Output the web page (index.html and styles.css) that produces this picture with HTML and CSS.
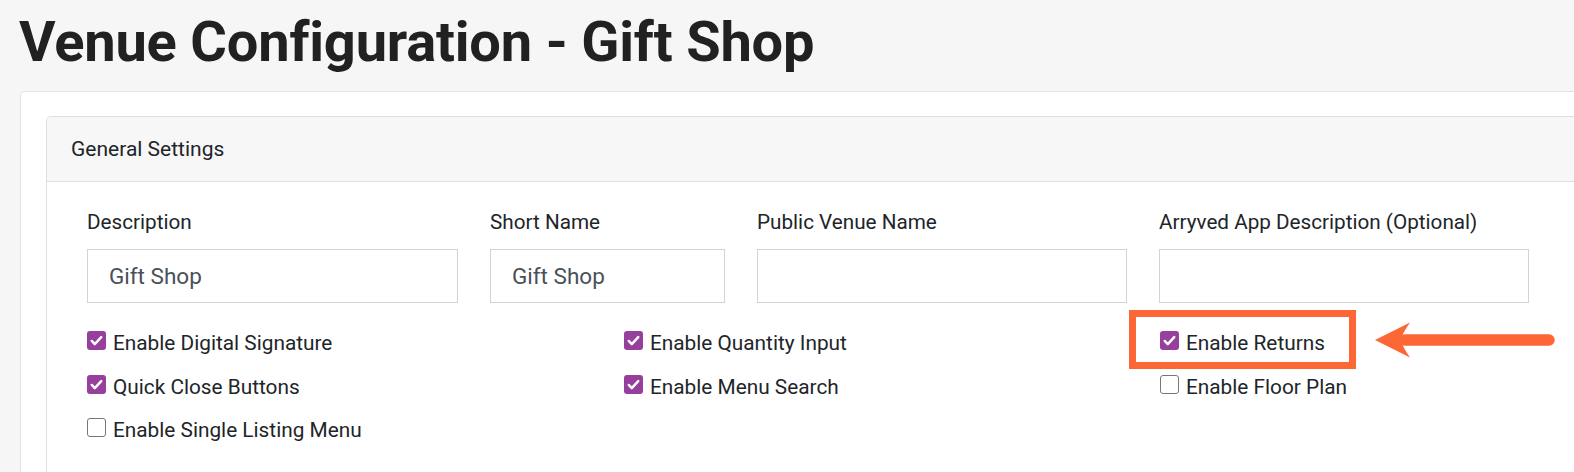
FILE: index.html
```html
<!DOCTYPE html>
<html>
<head>
   <link rel="stylesheet" href="styles.css">
</head>
<body>
   <h1 class="page-title">Venue Configuration - Gift Shop</h1>
   <div class="card outer-card">
      <div class="card inner-card">
         <div class="card-header">General Settings</div>
         <div class="card-body">
            <div class="fields">
               <div class="field">
                  <label for="description">Description</label>
                  <input type="text" id="description" value="Gift Shop">
               </div>
               <div class="field">
                  <label for="short-name">Short Name</label>
                  <input type="text" id="short-name" value="Gift Shop">
               </div>
               <div class="field">
                  <label for="public-name">Public Venue Name</label>
                  <input type="text" id="public-name" value="">
               </div>
               <div class="field">
                  <label for="app-desc">Arryved App Description (Optional)</label>
                  <input type="text" id="app-desc" value="">
               </div>
            </div>

            <div class="checks">
               <div class="check"><span class="box checked"><svg viewBox="0 0 20 20"><path d="M5 10.5l3.2 3.3L15 6.5"/></svg></span>Enable Digital Signature</div>
               <div class="check"><span class="box checked"><svg viewBox="0 0 20 20"><path d="M5 10.5l3.2 3.3L15 6.5"/></svg></span>Enable Quantity Input</div>
               <div class="check highlighted">
                  <span class="box checked"><svg viewBox="0 0 20 20"><path d="M5 10.5l3.2 3.3L15 6.5"/></svg></span>Enable Returns
                  <span class="callout"></span>
                  <svg class="arrow" viewBox="0 0 180 40">
                     <path class="arrow-shaft" d="M30 20H174"/>
                     <path class="arrow-head" d="M0 20L35 2.5Q27 14 26 20Q27 26 35 37.5Z"/>
                  </svg>
               </div>
               <div class="check"><span class="box checked"><svg viewBox="0 0 20 20"><path d="M5 10.5l3.2 3.3L15 6.5"/></svg></span>Quick Close Buttons</div>
               <div class="check"><span class="box checked"><svg viewBox="0 0 20 20"><path d="M5 10.5l3.2 3.3L15 6.5"/></svg></span>Enable Menu Search</div>
               <div class="check"><span class="box"></span>Enable Floor Plan</div>
               <div class="check"><span class="box"></span>Enable Single Listing Menu</div>
            </div>
         </div>
      </div>
   </div>
</body>
</html>
```

FILE: styles.css
```css
body {
   font-family: Roboto, 'Liberation Sans', sans-serif;
   background-color: #f6f6f6;
   color: #212529;
   margin: 0;
   overflow: hidden;
}

.page-title {
   font-size: 56px;
   font-weight: 700;
   line-height: 68px;
   color: #212121;
   margin: 8px 0 0 19px;
   letter-spacing: -0.2px;
}

.card {
   background-color: #fff;
   border: 1px solid #e2e2e2;
   border-radius: 5px;
}

.outer-card {
   margin: 15px 0 0 20px;
   width: 1640px;
   padding: 24px 0 0 25px;
   border-bottom: none;
}

.inner-card {
   border-color: #dfdfdf;
   border-bottom: none;
}

.card-header {
   height: 64px;
   background-color: #f7f7f7;
   border-bottom: 1px solid #dfdfdf;
   padding-left: 24px;
   display: flex;
   align-items: center;
   font-size: 21px;
   border-radius: 5px 5px 0 0;
}

.card-body {
   padding: 29px 0 40px 40px;
}

.fields {
   display: grid;
   grid-template-columns: 371px 235px 370px 370px;
   column-gap: 32px;
}

.field label {
   display: block;
   font-size: 20.7px;
   line-height: 23px;
   margin-bottom: 15px;
}

.field input {
   box-sizing: border-box;
   width: 100%;
   height: 54px;
   border: 1px solid #d0d3d8;
   border-radius: 0;
   padding: 0 21px;
   font-family: Roboto, 'Liberation Sans', sans-serif;
   font-size: 22.5px;
   color: #495057;
   outline: none;
}

.checks {
   display: grid;
   grid-template-columns: 537px 536px 400px;
   row-gap: 19.5px;
   margin-top: 28px;
}

.check {
   position: relative;
   display: flex;
   align-items: flex-start;
   gap: 7px;
   height: 24px;
   font-size: 20.8px;
   line-height: 24px;
}

.box {
   box-sizing: border-box;
   flex: none;
   width: 19px;
   height: 19px;
   border: 1.5px solid #777;
   border-radius: 3px;
   background-color: #fff;
   margin-top: 0;
}

.box.checked {
   border: none;
   background-color: #963f9c;
}

.box svg {
   display: block;
   width: 19px;
   height: 19px;
}

.box svg path {
   fill: none;
   stroke: #fff;
   stroke-width: 2.6;
   stroke-linecap: round;
   stroke-linejoin: round;
}

.callout {
   position: absolute;
   left: -31px;
   top: -21px;
   width: 227px;
   height: 59px;
   box-sizing: border-box;
   border: 7px solid #fd6735;
}

.arrow {
   position: absolute;
   left: 215px;
   top: -11px;
   width: 180px;
   height: 40px;
}

.arrow-shaft {
   stroke: #fd6735;
   stroke-width: 11.5;
   stroke-linecap: round;
}

.arrow-head {
   fill: #fd6735;
}
```
